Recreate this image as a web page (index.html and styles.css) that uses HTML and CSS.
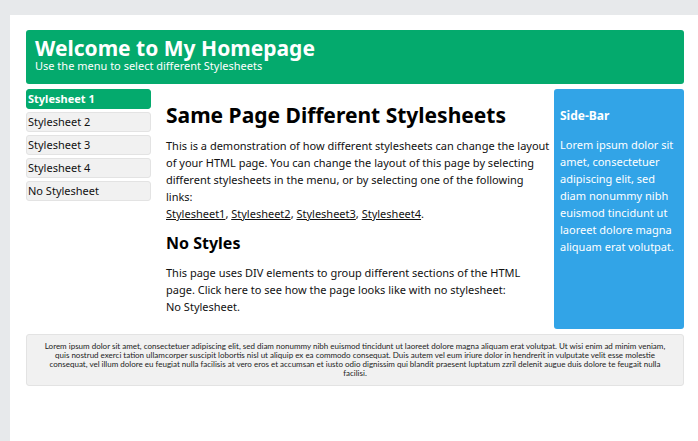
FILE: index.html
```html
<!DOCTYPE html>
<html lang="en">
<head>
<meta charset="utf-8">
<title>My Homepage</title>
<link rel="stylesheet" href="styles.css">
</head>
<body>
<div class="page">
  <header class="banner">
    <h1>Welcome to My Homepage</h1>
    <p>Use the menu to select different Stylesheets</p>
  </header>
  <div class="columns">
    <nav class="menu">
      <a class="active" href="#1">Stylesheet 1</a>
      <a href="#2">Stylesheet 2</a>
      <a href="#3">Stylesheet 3</a>
      <a href="#4">Stylesheet 4</a>
      <a href="#none">No Stylesheet</a>
    </nav>
    <main class="content">
      <h2>Same Page Different Stylesheets</h2>
      <p>This is a demonstration of how different stylesheets can change the layout<br>of your HTML page. You can change the layout of this page by selecting<br>different stylesheets in the menu, or by selecting one of the following<br>links:<br>
      <a href="#1">Stylesheet1</a>, <a href="#2">Stylesheet2</a>, <a href="#3">Stylesheet3</a>, <a href="#4">Stylesheet4</a>.</p>
      <h3>No Styles</h3>
      <p>This page uses DIV elements to group different sections of the HTML<br>page. Click here to see how the page looks like with no stylesheet:<br>No Stylesheet.</p>
    </main>
    <aside class="sidebar">
      <h4>Side-Bar</h4>
      <p>Lorem ipsum dolor sit<br>amet, consectetuer<br>adipiscing elit, sed<br>diam nonummy nibh<br>euismod tincidunt ut<br>laoreet dolore magna<br>aliquam erat volutpat.</p>
    </aside>
  </div>
  <footer class="footer">Lorem ipsum dolor sit amet, consectetuer adipiscing elit, sed diam nonummy nibh euismod tincidunt ut laoreet dolore magna aliquam erat volutpat. Ut wisi enim ad minim veniam,<br>quis nostrud exerci tation ullamcorper suscipit lobortis nisl ut aliquip ex ea commodo consequat. Duis autem vel eum iriure dolor in hendrerit in vulputate velit esse molestie<br>consequat, vel illum dolore eu feugiat nulla facilisis at vero eros et accumsan et iusto odio dignissim qui blandit praesent luptatum zzril delenit augue duis dolore te feugait nulla<br>facilisi.</footer>
</div>
</body>
</html>
```
FILE: styles.css
```css
* {
  box-sizing: border-box;
}

body {
  margin: 0;
  padding: 15px 0 0 10px;
  background: #e7e9eb;
  color: #111;
  font: 11px/17px "Noto Sans", "Open Sans", sans-serif;
}

h1, h2, h3, h4, p {
  margin: 0;
}

.page {
  min-height: calc(100vh - 15px);
  padding: 15px 14px 15px 16px;
  background: #fff;
}

.banner {
  padding: 8px 9px 12px;
  border-radius: 3px;
  background: #04aa6d;
  color: #fff;
}

.banner h1 {
  font-size: 21px;
  line-height: 21px;
}

.banner p {
  line-height: 13px;
}

.columns {
  display: grid;
  grid-template-columns: 125px 1fr 130px;
  margin: 5px 0;
}

.menu {
  display: flex;
  flex-direction: column;
  gap: 3px;
}

.menu a {
  padding: 0 1px 1px;
  border: 1px solid #e3e3e3;
  border-radius: 3px;
  background: #f1f1f1;
  color: #111;
  text-decoration: none;
}

.menu .active {
  border-color: #04aa6d;
  background: #04aa6d;
  color: #fff;
  font-weight: bold;
}

.content {
  padding: 11px 0 14px 15px;
  white-space: nowrap;
}

.content a {
  color: inherit;
}

.content h2 {
  margin-bottom: 7px;
  color: #000;
  font-size: 21px;
  line-height: 30px;
}

.content h3 {
  margin: 11px 0;
  color: #000;
  font-size: 16px;
  line-height: 20px;
}

.sidebar {
  padding: 18px 6px;
  border-radius: 3px;
  background: #32a4e7;
  color: #fff;
}

.sidebar h4 {
  margin-bottom: 12px;
  font-size: 12px;
}

.footer {
  padding: 7px 0;
  border: 1px solid #e3e3e3;
  border-radius: 3px;
  background: #f1f1f1;
  color: #222;
  font-family: Lato, "Noto Sans", sans-serif;
  font-size: 8px;
  line-height: 9px;
  text-align: center;
}
```
